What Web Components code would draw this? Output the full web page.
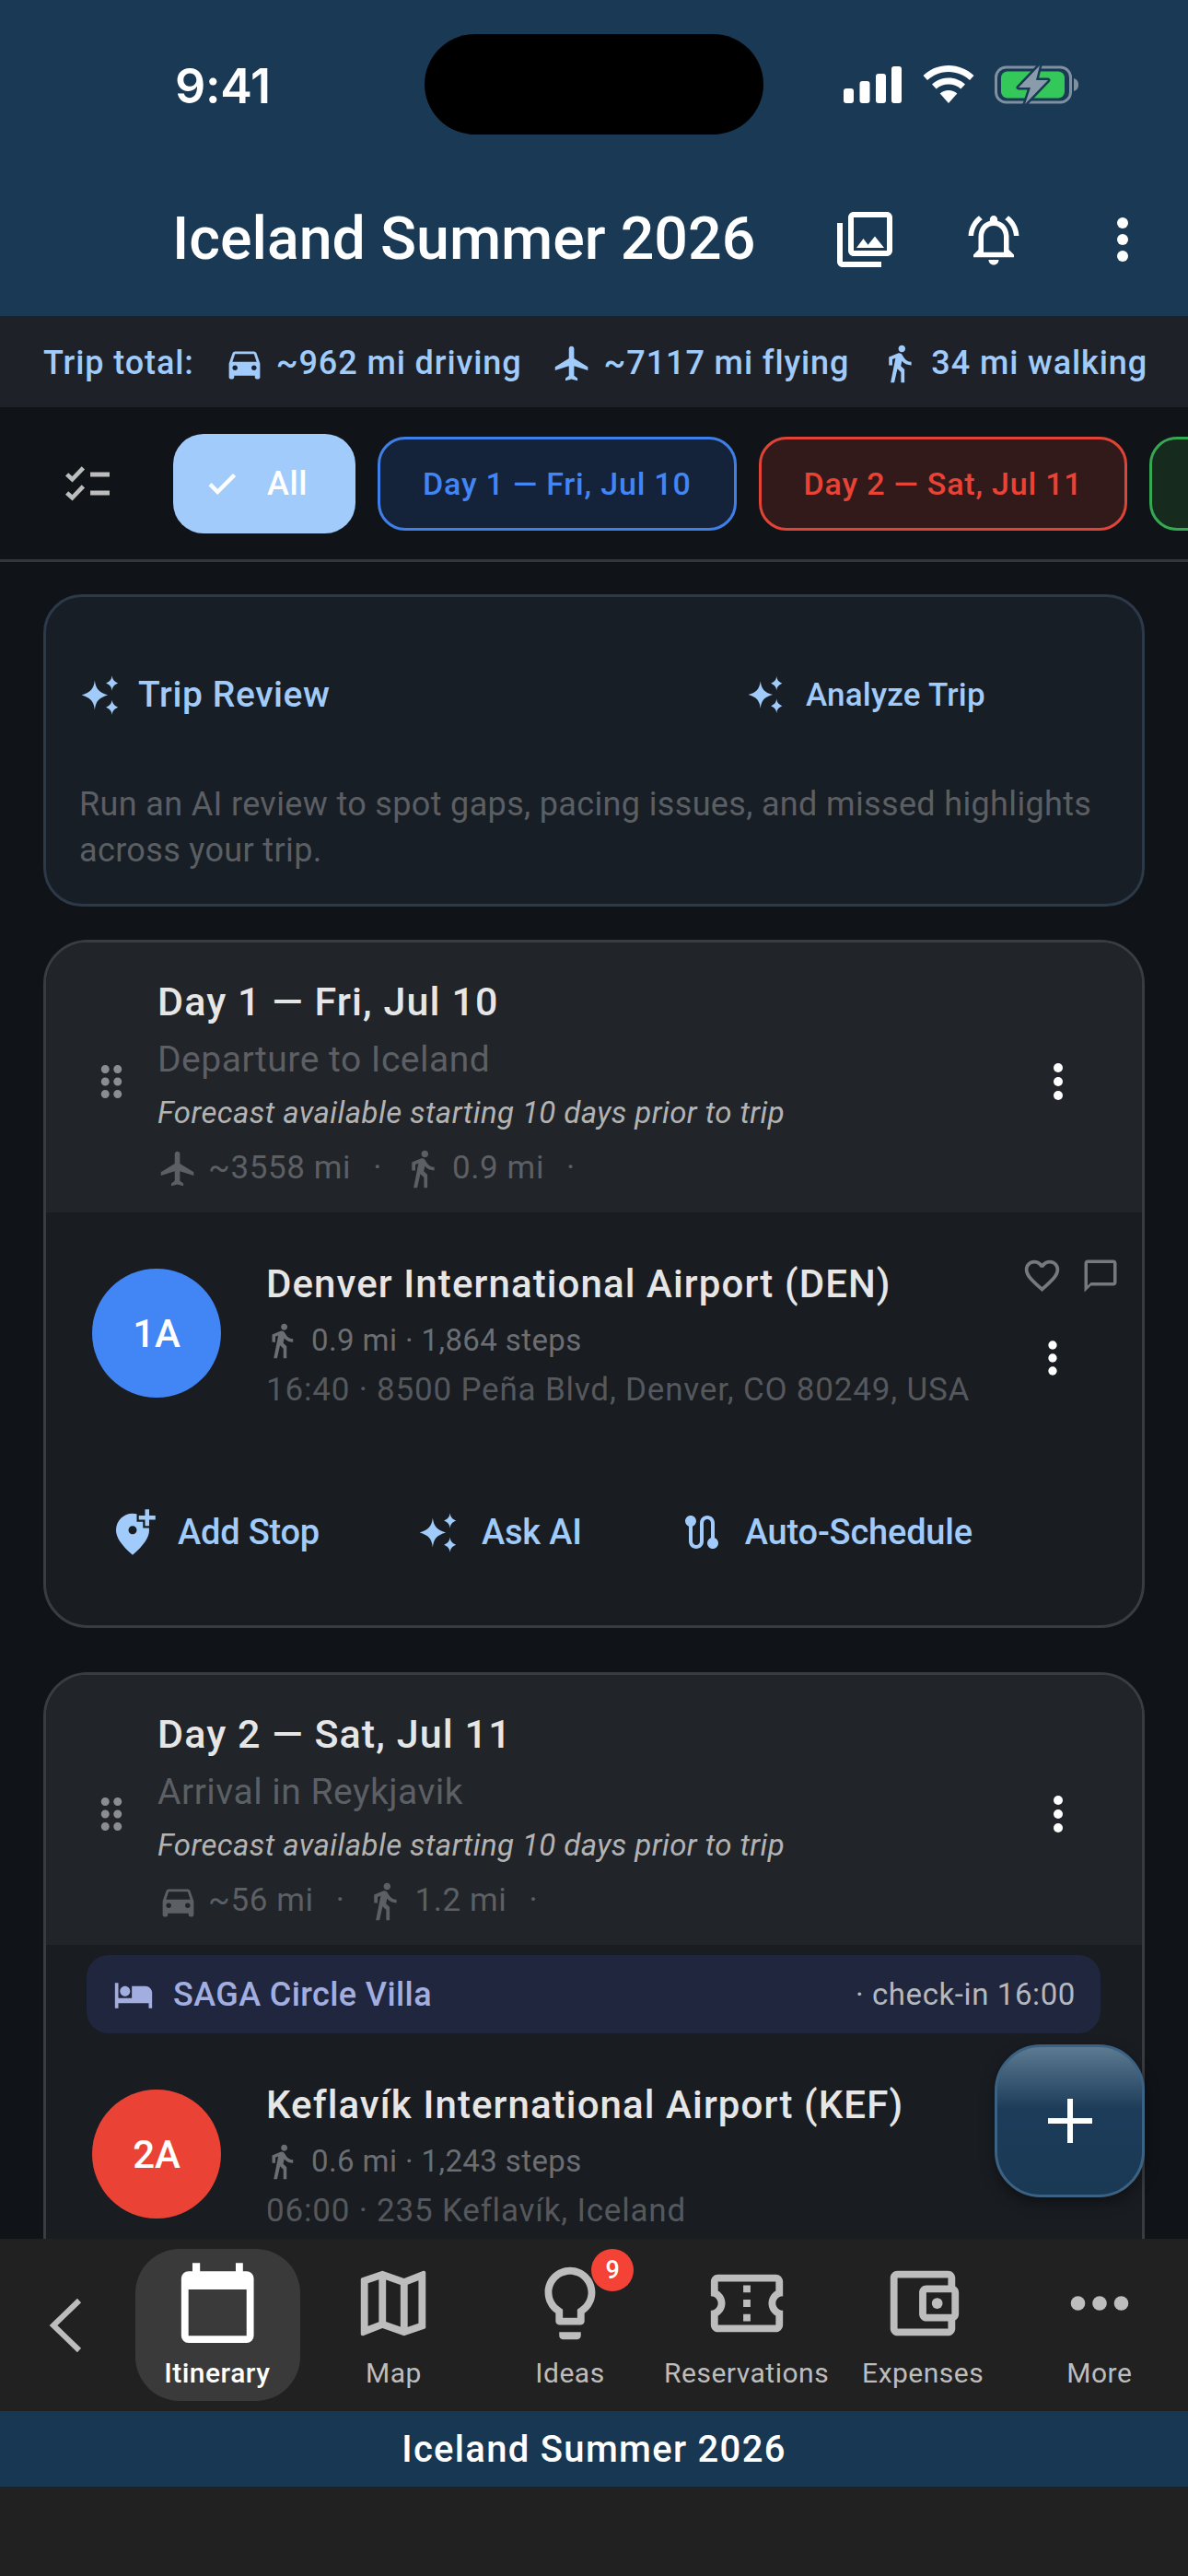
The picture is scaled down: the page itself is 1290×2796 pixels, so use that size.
<!DOCTYPE html>
<html><head><meta charset="utf-8">
<style>
html,body{margin:0;padding:0;background:#212121}
body{font-family:Roboto,"Noto Sans",sans-serif;width:1290px;height:2796px;overflow:hidden}
</style></head>
<body>
<trip-app>
  <status-bar></status-bar>
  <app-header>Iceland Summer 2026</app-header>
  <trip-totals></trip-totals>
  <filter-row>
    <filter-chip kind="all">All</filter-chip>
    <filter-chip kind="d1">Day 1 — Fri, Jul 10</filter-chip>
    <filter-chip kind="d2">Day 2 — Sat, Jul 11</filter-chip>
    <filter-chip kind="d3"></filter-chip>
  </filter-row>
  <main-scroll>
    <review-card></review-card>
    <day-card title="Day 1 — Fri, Jul 10" sub="Departure to Iceland" mode="flight" dist="~3558 mi" walk="0.9 mi">
      <stop-row badge="1A" color="#4285f4" name="Denver International Airport (DEN)" walk="0.9 mi · 1,864 steps" addr="16:40 · 8500 Peña Blvd, Denver, CO 80249, USA"></stop-row>
      <day-actions></day-actions>
    </day-card>
    <day-card tail title="Day 2 — Sat, Jul 11" sub="Arrival in Reykjavik" mode="car" dist="~56 mi" walk="1.2 mi">
      <hotel-bar name="SAGA Circle Villa" note="· check-in 16:00"></hotel-bar>
      <stop-row badge="2A" color="#ea4335" name="Keflavík International Airport (KEF)" walk="0.6 mi · 1,243 steps" addr="06:00 · 235 Keflavík, Iceland"></stop-row>
    </day-card>
  </main-scroll>
  <bottom-nav></bottom-nav>
  <title-strip>Iceland Summer 2026</title-strip>
  <add-fab></add-fab>
</trip-app>
<script>
const ICONS={
car:'<path d="M18.92 6.01C18.72 5.42 18.16 5 17.5 5h-11c-.66 0-1.21.42-1.42 1.01L3 12v8c0 .55.45 1 1 1h1c.55 0 1-.45 1-1v-1h12v1c0 .55.45 1 1 1h1c.55 0 1-.45 1-1v-8l-2.08-5.99zM6.5 16c-.83 0-1.5-.67-1.5-1.5S5.67 13 6.5 13s1.5.67 1.5 1.5S7.33 16 6.5 16zm11 0c-.83 0-1.5-.67-1.5-1.5s.67-1.5 1.5-1.5 1.5.67 1.5 1.5-.67 1.5-1.5 1.5zM5 11l1.5-4.5h11L19 11H5z"/>',
flight:'<path d="M21 16v-2l-8-5V3.5c0-.83-.67-1.5-1.5-1.5S10 2.67 10 3.5V9l-8 5v2l8-2.5V19l-2 1.5V22l3.5-1 3.5 1v-1.5L13 19v-5.5l8 2.5z"/>',
walk:'<path d="M13.5 5.5c1.1 0 2-.9 2-2s-.9-2-2-2-2 .9-2 2 .9 2 2 2zM9.8 8.9L7 23h2.1l1.8-8 2.1 2v6h2v-7.5l-2.1-2 .6-3C14.8 12 16.8 13 19 13v-2c-1.9 0-3.5-1-4.3-2.4l-1-1.6c-.4-.6-1-1-1.7-1-.3 0-.5.1-.8.1L6 8.3V13h2V9.6l1.8-.7"/>',
vert:'<circle cx="12" cy="6" r="2"/><circle cx="12" cy="12" r="2"/><circle cx="12" cy="18" r="2"/>',
photos:'<path d="M20 4v12H8V4h12m0-2H8c-1.1 0-2 .9-2 2v12c0 1.1.9 2 2 2h12c1.1 0 2-.9 2-2V4c0-1.1-.9-2-2-2zm-8.5 9.67l1.69 2.26 2.48-3.1L19 15H9zM2 6v14c0 1.1.9 2 2 2h14v-2H4V6H2z"/>',
bell:'<path d="M7.58 4.08L6.15 2.65C3.75 4.48 2.17 7.3 2.03 10.5h2c.15-2.65 1.51-4.97 3.55-6.42zm12.39 6.42h2c-.15-3.2-1.73-6.02-4.12-7.85l-1.42 1.43c2.02 1.45 3.39 3.77 3.54 6.42zM18 11c0-3.07-1.64-5.64-4.5-6.32V4c0-.83-.67-1.5-1.5-1.5s-1.5.67-1.5 1.5v.68C7.63 5.36 6 7.92 6 11v5l-2 2v1h16v-1l-2-2v-5zm-2 6H8v-6c0-2.48 1.51-4.5 4-4.5s4 2.02 4 4.5v6zm-4 5c.14 0 .27-.01.4-.04.65-.14 1.18-.58 1.44-1.18.1-.24.15-.5.15-.78h-4c.01 1.1.9 2 2.01 2z"/>',
checklist:'<path d="M13.8 6.450h9.300v2.200h-9.300zM13.800 15.300h9.300v2.200h-9.300z"/><path d="M2.500 7.500L5.100 9.900 10.400 4.400M2.500 16.400L5.100 18.800 10.400 13.300" fill="none" stroke="currentColor" stroke-width="2.100"/>',
check:'<path stroke="currentColor" stroke-width=".8" d="M9 16.17L4.83 12l-1.41 1.41L9 19 21 7l-1.41-1.41z"/>',
spark:'<path d="M9 3.500c.6 4.900 2.400 7 7.600 8.500-5.200 1.500-7 3.600-7.600 8.500-.6-4.900-2.400-7-7.600-8.500 5.200-1.500 7-3.600 7.600-8.500zM19 .6c.35 2.400 1.150 3.300 3.500 4.400-2.350 1.100-3.150 2-3.500 4.400-.35-2.400-1.150-3.300-3.500-4.400 2.350-1.100 3.150-2 3.500-4.400zM19 14.600c.35 2.400 1.150 3.300 3.500 4.400-2.350 1.100-3.150 2-3.500 4.400-.35-2.400-1.150-3.300-3.500-4.400 2.350-1.100 3.150-2 3.500-4.400z"/>',
drag:'<path d="M11 18c0 1.100-.9 2-2 2s-2-.9-2-2 .9-2 2-2 2 .9 2 2zm-2-8c-1.100 0-2 .9-2 2s.9 2 2 2 2-.9 2-2-.9-2-2-2zm0-6c-1.100 0-2 .9-2 2s.9 2 2 2 2-.9 2-2-.9-2-2-2zm6 4c1.100 0 2-.9 2-2s-.9-2-2-2-2 .9-2 2 .9 2 2 2zm0 2c-1.100 0-2 .9-2 2s.9 2 2 2 2-.9 2-2-.9-2-2-2zm0 6c-1.100 0-2 .9-2 2s.9 2 2 2 2-.9 2-2-.9-2-2-2z"/>',
heart:'<path d="M16.5 3c-1.740 0-3.410.810-4.500 2.090C10.910 3.810 9.240 3 7.500 3 4.420 3 2 5.420 2 8.500c0 3.780 3.400 6.860 8.550 11.540L12 21.350l1.450-1.320C18.600 15.360 22 12.280 22 8.500 22 5.420 19.580 3 16.500 3zm-4.400 15.550l-.1.1-.1-.1C7.140 14.240 4 11.390 4 8.500 4 6.500 5.500 5 7.500 5c1.540 0 3.040.990 3.570 2.360h1.870C13.460 5.990 14.960 5 16.500 5c2 0 3.500 1.500 3.500 3.500 0 2.890-3.140 5.740-7.900 10.050z"/>',
comment:'<path d="M20 2H4c-1.100 0-2 .9-2 2v18l4-4h14c1.100 0 2-.9 2-2V4c0-1.100-.9-2-2-2zm0 14H6l-2 2V4h16v12z"/>',
addloc:'<path d="M20 1v3h3v2h-3v3h-2V6h-3V4h3V1h2zm-8 12c1.100 0 2-.9 2-2s-.9-2-2-2-2 .9-2 2 .9 2 2 2zm2-9.750V7h3v3h2.920c.05.390.08.790.08 1.200 0 3.320-2.670 7.250-8 11.800-5.330-4.550-8-8.480-8-11.800C4 6.220 7.800 3 12 3c.68 0 1.350.08 2 .25z"/>',
route:'<path d="M19 15.180V7c0-2.210-1.790-4-4-4s-4 1.790-4 4v10c0 1.100-.9 2-2 2s-2-.9-2-2V8.820C8.160 8.400 9 7.300 9 6c0-1.660-1.340-3-3-3S3 4.340 3 6c0 1.300.84 2.400 2 2.820V17c0 2.210 1.790 4 4 4s4-1.790 4-4V7c0-1.100.9-2 2-2s2 .9 2 2v8.180c-1.160.41-2 1.510-2 2.820 0 1.660 1.340 3 3 3s3-1.340 3-3c0-1.300-.84-2.400-2-2.820z"/>',
hotel:'<path d="M7 13c1.660 0 3-1.340 3-3S8.660 7 7 7s-3 1.340-3 3 1.340 3 3 3zm12-6h-8v7H3V5H1v15h2v-3h18v3h2v-9c0-2.210-1.790-4-4-4z"/>',
map:'<path d="M20.500 3l-.16.03L15 5.100 9 3 3.360 4.900c-.21.07-.36.25-.36.48V20.500c0 .28.22.5.5.5l.16-.03L9 18.900l6 2.100 5.640-1.900c.21-.07.36-.25.36-.48V3.500c0-.28-.22-.5-.5-.5zM10 5.470l4 1.400v11.660l-4-1.400V5.470zm-5 .99l3-1.010v11.700l-3 1.160V6.460zm14 11.080l-3 1.010V6.860l3-1.160v11.840z"/>',
bulb:'<path d="M9 21c0 .55.45 1 1 1h4c.55 0 1-.45 1-1v-1H9v1zm3-19C8.140 2 5 5.140 5 9c0 2.380 1.190 4.470 3 5.740V17c0 .55.45 1 1 1h6c.55 0 1-.45 1-1v-2.260c1.810-1.270 3-3.360 3-5.740 0-3.860-3.140-7-7-7zm2.850 11.100l-.85.6V16h-4v-2.300l-.85-.6C7.800 12.160 7 10.630 7 9c0-2.760 2.240-5 5-5s5 2.240 5 5c0 1.630-.8 3.160-2.150 4.100z"/>',
ticket:'<path d="M22 10V6c0-1.110-.9-2-2-2H4c-1.100 0-1.990.89-1.990 2v4c1.100 0 1.990.9 1.990 2s-.89 2-2 2v4c0 1.100.9 2 2 2h16c1.100 0 2-.9 2-2v-4c-1.100 0-2-.9-2-2s.9-2 2-2zm-2-1.460c-1.190.69-2 1.990-2 3.460s.81 2.770 2 3.460V18H4v-2.540c1.190-.69 2-1.990 2-3.460 0-1.480-.8-2.770-1.990-3.460L4 6h16v2.540zM11 15h2v2h-2zm0-4h2v2h-2zm0-4h2v2h-2z"/>',
wallet:'<path d="M21 7.280V5c0-1.100-.9-2-2-2H5c-1.110 0-2 .9-2 2v14c0 1.100.89 2 2 2h14c1.100 0 2-.9 2-2v-2.280c.59-.35 1-.98 1-1.720V9c0-.74-.41-1.370-1-1.720zM20 9v6h-7V9h7zM5 19V5h14v2h-6c-1.100 0-2 .9-2 2v6c0 1.100.9 2 2 2h6v2H5z"/><circle cx="16" cy="12" r="1.500"/>',
horiz:'<circle cx="6" cy="12" r="2"/><circle cx="12" cy="12" r="2"/><circle cx="18" cy="12" r="2"/>',
calendar:'<path fill-rule="evenodd" d="M5.100.8h2.100v2.300h9.900V.8h2v2.300h1a2 2 0 0 1 2 2v15.900a2 2 0 0 1-2 2H4a2 2 0 0 1-2-2V5.100a2 2 0 0 1 2-2h1.100zM4 8.200V21h16.100V8.200z"/>'
};
function def(name,css,html,extra){
  customElements.define(name,class extends HTMLElement{
    constructor(){super();this.attachShadow({mode:'open'});}
    connectedCallback(){
      const a=n=>this.getAttribute(n)||'';
      this.shadowRoot.innerHTML='<style>'+css+'</style>'+(typeof html==='function'?html(a):html);
      if(extra)extra.call(this);
    }
  });
}
def('ui-icon',':host{display:inline-flex;flex:none;line-height:0}svg{display:block;fill:currentColor}',
  a=>`<svg width="${a('size')||48}" height="${a('size')||48}" viewBox="0 0 24 24">${ICONS[a('name')]||''}</svg>`);

def('trip-app',':host{display:flex;flex-direction:column;position:relative;width:1290px;height:2796px;overflow:hidden;background:#212121;color:#fff}','<slot></slot>');

def('status-bar',`:host{display:flex;align-items:center;height:186px;background:#193955;box-sizing:border-box;padding-bottom:3px}
.time{font:600 52px Inter,Roboto,sans-serif;margin:3px 0 0 190px;width:271px;letter-spacing:-.3px;color:#fff}
.island{width:368px;height:109px;border-radius:55px;background:#000;flex:none}
.sys{margin-left:87px;display:flex;align-items:center}
svg{display:block}`,
`<span class="time">9:41</span><div class="island"></div><div class="sys">
<svg width="63" height="40" viewBox="0 0 63 40" fill="#fff"><rect x="0" y="24" width="11" height="16" rx="3"/><rect x="17.500" y="16" width="11" height="24" rx="3"/><rect x="35" y="8" width="11" height="32" rx="3"/><rect x="52" y="0" width="11" height="40" rx="3"/></svg>
<svg style="margin-left:23px" width="56" height="41" viewBox="0 0 56 41" fill="#fff"><path d="M28 0c10.500 0 20 4 27.500 11L51 16C45 10.500 37 7 28 7S11 10.500 5 16L.5 11C8 4 17.500 0 28 0z"/><path d="M28 13.500c7 0 13.300 2.700 18 7l-4.700 5C37.700 22.300 33 20.500 28 20.500s-9.700 1.800-13.300 5l-4.700-5c4.700-4.300 11-7 18-7z"/><path d="M28 27c3.600 0 6.900 1.300 9.300 3.500L28 41l-9.300-10.500C21.100 28.300 24.400 27 28 27z"/></svg>
<svg style="margin-left:22px" width="91" height="44" viewBox="0 0 91 44"><rect x="1.500" y="3" width="81" height="38" rx="11" fill="none" stroke="#7f90a1" stroke-width="3"/><path d="M86 15c3 1 5 3 5 7s-2 6-5 7z" fill="#7f90a1"/><rect x="7" y="7.500" width="69" height="29" rx="7" fill="#34c759"/><path d="M49 1L26 25h13l-6 18 25-26H45z" fill="#8a9bab" stroke="#193955" stroke-width="5" stroke-linejoin="round" paint-order="stroke"/></svg></div>`);

def('app-header',`:host{display:flex;align-items:center;height:157px;background:#193955;color:#fff;padding-left:187px;box-sizing:border-box}
.t{flex:1;font:500 64.500px/1.2 Roboto,sans-serif;white-space:nowrap;margin-top:-10px}
.b{width:140px;display:flex;justify-content:center;margin-top:-10px}`,
`<div class="t"><slot></slot></div>
<div class="b"><ui-icon name="photos" size="72"></ui-icon></div>
<div class="b"><ui-icon name="bell" size="66"></ui-icon></div>
<div class="b" style="margin-right:1px"><ui-icon name="vert" size="72"></ui-icon></div>`);

def('trip-totals',`:host{display:flex;align-items:center;height:99px;background:#1e2228;color:#a0cbfb;padding:3px 0 0 47px;box-sizing:border-box;font:500 36px Roboto,sans-serif;letter-spacing:.9px;white-space:nowrap}
ui-icon{margin-left:32px;margin-right:12px}`,
`<span>Trip total:</span><ui-icon name="car" size="45"></ui-icon><span>~962 mi driving</span><ui-icon name="flight" size="45"></ui-icon><span>~7117 mi flying</span><ui-icon name="walk" size="45"></ui-icon><span>34 mi walking</span>`);

def('filter-row',`:host{display:flex;align-items:center;height:168px;background:#101318;border-bottom:3px solid #33363a;box-sizing:border-box;overflow:hidden;color:#bdbdbd}
.i{width:188px;display:flex;justify-content:center;flex:none}
.c{display:flex;align-items:center;gap:24px}`,
`<div class="i"><ui-icon name="checklist" size="54"></ui-icon></div><div class="c"><slot></slot></div>`);

def('filter-chip',`:host{display:flex;align-items:center;box-sizing:border-box;flex:none;white-space:nowrap;font:500 34px Roboto,sans-serif;letter-spacing:.8px;border:3px solid;height:102px;border-radius:30px;padding:0 46px}
:host([kind=all]){background:#a0cbfb;border:0;height:108px;width:198px;border-radius:33px;color:#fff;padding:0 0 0 34px;gap:30px;font-size:36px;letter-spacing:.6px}
:host([kind=d1]){background:#15233a;border-color:#3f80e8;color:#4285f4}
:host([kind=d2]){background:#321a1a;border-color:#e04437;color:#ea4335}
:host([kind=d3]){background:#162b1e;border-color:#34a853;color:#34a853;width:200px}`,
a=>(a('kind')==='all'?'<ui-icon name="check" size="38"></ui-icon>':'')+'<slot></slot>');

def('main-scroll',`:host{display:block;flex:1;min-height:0;overflow:hidden;padding:35px 47px 0;box-sizing:border-box;background:#101318}`,'<slot></slot>');

def('review-card',`:host{display:block;box-sizing:border-box;height:339px;background:#181e26;border:3px solid #2b3949;border-radius:42px;padding:33px 36px;margin-bottom:36px;overflow:hidden}
.r{display:flex;align-items:center;height:146px;color:#a0cbfb}
.t{flex:1;display:flex;align-items:center;gap:19px;font:500 39px Roboto,sans-serif;letter-spacing:.6px}
.a{width:394px;display:flex;align-items:center;gap:23px;font:500 35px Roboto,sans-serif;letter-spacing:.2px;box-sizing:border-box}
p{margin:21px 0 0;font:400 36px/50px Roboto,sans-serif;letter-spacing:.35px;color:#5b5e62}`,
`<div class="r"><div class="t"><ui-icon name="spark" size="45"></ui-icon>Trip Review</div><div class="a"><ui-icon name="spark" size="42"></ui-icon>Analyze Trip</div></div>
<p>Run an AI review to spot gaps, pacing issues, and missed highlights across your trip.</p>`);

def('day-card',`:host{display:block;box-sizing:border-box;background:#191c21;border:3px solid #3a3d40;border-radius:48px;margin-bottom:48px;overflow:hidden}
:host([tail]){padding-bottom:220px}
.h{display:flex;align-items:center;background:#212429;height:293px;box-sizing:border-box}
.g{width:121px;flex:none;display:flex;justify-content:center;padding:9px 0 0 20px;box-sizing:border-box;color:#8b8d90}
.m{flex:1;min-width:0;padding-top:16px}
.d{width:121px;display:flex;justify-content:flex-start;flex:none;color:#fff;padding-top:9px;box-sizing:border-box}
.ti{font:500 43px/54px Roboto,sans-serif;letter-spacing:1.1px;color:#e6e6e6}
.su{font:400 39px/54px Roboto,sans-serif;letter-spacing:.5px;color:#5c5f63;margin-top:9px}
.fo{font:italic 400 33px/45px Roboto,sans-serif;letter-spacing:.42px;color:#b3b3b3;margin-top:8px}
.st{display:flex;align-items:center;font:400 35px/54px Roboto,sans-serif;letter-spacing:.6px;color:#5c5f63;margin-top:11px;white-space:nowrap}
.st ui-icon{margin-right:10px}
.dot{margin:0 21px 0 24px}`,
a=>`<div class="h"><div class="g"><ui-icon name="drag" size="54"></ui-icon></div><div class="m">
<div class="ti">${a('title')}</div><div class="su">${a('sub')}</div>
<div class="fo">Forecast available starting 10 days prior to trip</div>
<div class="st"><ui-icon name="${a('mode')}" size="45"></ui-icon><span>${a('dist')}</span><span class="dot">·</span><ui-icon name="walk" size="45"></ui-icon><span>${a('walk')}</span><span class="dot">·</span></div>
</div><div class="d"><ui-icon name="vert" size="60"></ui-icon></div></div><slot></slot>`);

def('stop-row',`:host{display:flex;align-items:flex-start;padding:51px 24px 0 50px;box-sizing:border-box}
.c{width:140px;height:140px;border-radius:50%;flex:none;margin:10px 49px 0 0;display:flex;align-items:center;justify-content:center;font:500 42px Roboto,sans-serif;color:#fff}
.x{flex:1;min-width:0;white-space:nowrap}
.n{font:500 42px/54px Roboto,sans-serif;letter-spacing:1.1px;color:#e6e6e6}
.w{display:flex;align-items:center;gap:11px;font:400 33px/48px Roboto,sans-serif;letter-spacing:.4px;color:#6b6e72;margin-top:10px}
.w ui-icon{margin-left:-4px}
.ad{font:400 35px/48px Roboto,sans-serif;letter-spacing:.8px;color:#55585c;margin-top:6px}
.s{width:107px;flex:none;margin-top:-5px;color:#77797c}
.p{display:flex;align-items:center;gap:20px;height:45px}
.v{display:block;margin:39px 0 0 6px;color:#fff;width:56px}`,
a=>`<div class="c" style="background:${a('color')}">${a('badge')}</div><div class="x"><div class="n">${a('name')}</div>
<div class="w"><ui-icon name="walk" size="42"></ui-icon><span>${a('walk')}</span></div><div class="ad">${a('addr')}</div></div>
<div class="s"><div class="p"><ui-icon name="heart" size="45"></ui-icon><ui-icon name="comment" size="42"></ui-icon></div><div class="v"><ui-icon name="vert" size="56"></ui-icon></div></div>`);

def('day-actions',`:host{display:flex;align-items:center;height:144px;margin:58px 0 29px;padding-left:67px;color:#a0cbfb;font:500 38px Roboto,sans-serif;letter-spacing:-.2px;white-space:nowrap}
.b{display:flex;align-items:center;margin-right:106px}`,
`<div class="b" style="gap:22px"><ui-icon name="addloc" size="54"></ui-icon>Add Stop</div><div class="b" style="gap:25px"><ui-icon name="spark" size="45"></ui-icon>Ask AI</div><div class="b" style="gap:23px"><ui-icon name="route" size="48"></ui-icon>Auto-Schedule</div>`);

def('hotel-bar',`:host{display:flex;align-items:center;height:85px;margin:11px 45px 0 44px;padding:0 27px 0 29px;background:#20263d;border-radius:24px;font:500 36px Roboto,sans-serif;letter-spacing:.4px;white-space:nowrap;color:#a3aee0}
ui-icon{margin-right:21px}
.n{flex:1}
.t{font-weight:400;color:#b4b8bf;font-size:33px;letter-spacing:.6px}`,
a=>`<ui-icon name="hotel" size="44"></ui-icon><span class="n">${a('name')}</span><span class="t">${a('note')}</span>`);

def('add-fab',`:host{position:absolute;left:1080px;top:2219px;width:163px;height:166px;box-sizing:border-box;border-radius:50px;border:3px solid #3c6283;background:linear-gradient(#5d7a92 0,#1c3c59 42%,#193955 100%);display:flex;align-items:center;justify-content:center;color:#fff;box-shadow:0 6px 16px rgba(0,0,0,.4)}`,
`<svg width="54" height="54" viewBox="0 0 54 54"><path d="M24 3h6v21h21v6H30v21h-6V30H3v-6h21z" fill="#fff"/></svg>`);

def('bottom-nav',`:host{display:flex;align-items:stretch;height:187px;background:#212121;box-sizing:border-box;padding:11px 0}
.back{width:140px;flex:none;display:flex;align-items:center;justify-content:flex-start;padding-left:52px;box-sizing:border-box}
.n{position:relative;width:191.6px;flex:none;display:flex;flex-direction:column;align-items:center;color:#bdbdbd;font:400 30px Roboto,sans-serif;letter-spacing:.5px;white-space:nowrap}
.n span{margin-top:11px;line-height:36px}
.n ui-icon{margin-top:12px}
.on{color:#fff;font-weight:500}
.on::before{content:"";position:absolute;left:7px;right:6px;top:0;bottom:0;background:#3a3a3a;border-radius:48px;z-index:0}
.on>*{position:relative}
.bd{position:absolute;left:119px;top:0;width:46px;height:46px;border-radius:50%;background:#f44336;color:#fff;font:500 27px/46px Roboto,sans-serif;letter-spacing:0;text-align:center}`,
`<div class="back"><svg width="38" height="60" viewBox="0 0 38 60"><path d="M34 3L6 30l28 27" fill="none" stroke="#bdbdbd" stroke-width="6"/></svg></div>
<div class="n on"><ui-icon name="calendar" size="94"></ui-icon><span>Itinerary</span></div>
<div class="n"><ui-icon name="map" size="94"></ui-icon><span>Map</span></div>
<div class="n"><ui-icon name="bulb" size="94"></ui-icon><span>Ideas</span><div class="bd">9</div></div>
<div class="n"><ui-icon name="ticket" size="94"></ui-icon><span>Reservations</span></div>
<div class="n"><ui-icon name="wallet" size="94"></ui-icon><span>Expenses</span></div>
<div class="n"><ui-icon name="horiz" size="94"></ui-icon><span>More</span></div>`);

def('title-strip',`:host{display:flex;align-items:center;justify-content:center;height:82px;margin-bottom:97px;background:#183753;color:#fff;font:500 40px Roboto,sans-serif;letter-spacing:1.3px;white-space:nowrap}`,'<slot></slot>');
</script>
</body></html>
